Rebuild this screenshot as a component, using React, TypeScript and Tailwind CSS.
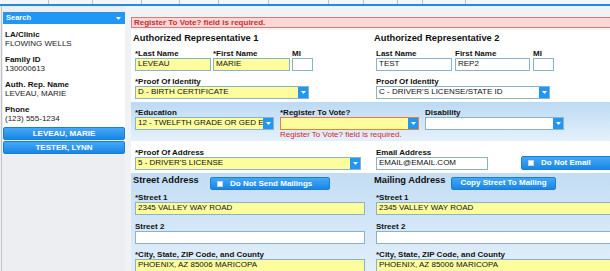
import React from 'react';

function Caret() {
  return (
    <svg width="5" height="3" viewBox="0 0 5 3">
      <path d="M0 0h5L2.5 3z" fill="#fff" />
    </svg>
  );
}

function Label({ children }: { children: React.ReactNode }) {
  return (
    <div className="h-[9px] text-[8px] leading-[9px] font-bold text-[#111] whitespace-nowrap">
      {children}
    </div>
  );
}

interface BoxProps {
  value?: string;
  yellow?: boolean;
  invalid?: boolean;
  className?: string;
}

function TextBox({ value = '', yellow = false, className = '' }: BoxProps) {
  return (
    <div
      className={`h-[13px] border border-[#8ab3c7] ${yellow ? 'bg-[#fdfd9d]' : 'bg-white'} pl-[2px] text-[8px] leading-[10px] text-[#111] whitespace-nowrap overflow-hidden ${className}`}
    >
      {value}
    </div>
  );
}

function Select({ value = '', yellow = false, invalid = false, className = '' }: BoxProps) {
  return (
    <div
      className={`flex h-[13px] border ${invalid ? 'border-[#e2813f]' : 'border-[#8ab3c7]'} ${yellow ? 'bg-[#fdfd9d]' : 'bg-white'} ${className}`}
    >
      <div className="flex-1 min-w-0 pl-[2px] text-[8px] leading-[10px] text-[#111] whitespace-nowrap overflow-hidden">
        {value}
      </div>
      <div className="w-[10px] shrink-0 flex items-center justify-center bg-[#2196f3]">
        <Caret />
      </div>
    </div>
  );
}

function BlueButton({
  children,
  checkbox = false,
  className = '',
}: {
  children: React.ReactNode;
  checkbox?: boolean;
  className?: string;
}) {
  return (
    <div
      className={`flex items-center h-[13px] rounded-[2px] border border-[#1a7ed6] bg-linear-to-b from-[#42a9f7] to-[#1786e6] text-white text-[8px] font-bold whitespace-nowrap ${className}`}
    >
      {checkbox && <span className="w-[6px] h-[6px] bg-white border border-[#c9d3dc] ml-[6px] mr-[7px] shrink-0" />}
      {children}
    </div>
  );
}

function SideGroup({ label, value }: { label: string; value: string }) {
  return (
    <div>
      <div className="text-[8px] leading-[9px] font-bold text-[#111]">{label}</div>
      <div className="text-[8px] leading-[9px] text-[#222]">{value}</div>
    </div>
  );
}

const ticks = [49, 44, 49, 38, 39, 50, 60, 35, 34, 25, 43];

export default function App() {
  return (
    <div className="w-[610px] h-[271px] overflow-hidden bg-[#eceef1] flex flex-col font-['Liberation_Sans',Arial,sans-serif]">
      {/* tab strip remnants */}
      <div className="h-[4px] flex bg-[#f4f5f7]">
        {ticks.map((w, i) => (
          <div key={i} className="h-[4px] border-r border-[#b9c0c8]" style={{ width: w }} />
        ))}
      </div>
      <div className="h-[2px] bg-[#1b8de8]" />

      <div className="flex flex-1 min-h-0">
        {/* sidebar */}
        <div className="w-[124px] shrink-0 ml-[1px] border-l border-[#bfc4cb] flex flex-col">
          <div className="mt-[6px] ml-[1px] h-[12px] flex items-center justify-between bg-[#2196f3] pl-[3px] pr-[4px]">
            <span className="text-[7.5px] font-bold text-white">Search</span>
            <Caret />
          </div>
          <div className="ml-[1px] bg-white pt-[6px] pb-[4px] pl-[2px] flex flex-col gap-[7px]">
            <SideGroup label="LA/Clinic" value="FLOWING WELLS" />
            <SideGroup label="Family ID" value="130000613" />
            <SideGroup label="Auth. Rep. Name" value="LEVEAU, MARIE" />
            <SideGroup label="Phone" value="(123) 555-1234" />
          </div>
          <div className="ml-[1px] flex flex-col gap-[1px]">
            <BlueButton className="h-[11px] justify-center">LEVEAU, MARIE</BlueButton>
            <BlueButton className="h-[11px] justify-center">TESTER, LYNN</BlueButton>
          </div>
        </div>

        {/* main */}
        <div className="w-[486px] shrink-0 pl-[6px] bg-[#f1f2f4] flex flex-col">
          <div className="mt-[11px] h-[11px] w-[520px] border border-[#d9797a] bg-[#fdd6d6] pl-[2px] text-[8px] leading-[9px] font-bold text-[#c62f33] whitespace-nowrap">
            Register To Vote? field is required.
          </div>

          <div className="mt-[2px] flex-1 bg-white w-[520px] flex flex-col">
            {/* Authorized representatives */}
            <div className="flex h-[72px] pt-[3px]">
              <div className="w-[241px] shrink-0">
                <div className="pl-[2px] text-[9.3px] leading-[11px] font-bold text-[#111]">
                  Authorized Representative 1
                </div>
                <div className="pl-[4px] mt-[4.5px] flex gap-[2px]">
                  <div className="w-[76px]">
                    <Label>*Last Name</Label>
                    <TextBox yellow value="LEVEAU" className="h-[12.5px]" />
                  </div>
                  <div className="w-[77px]">
                    <Label>*First Name</Label>
                    <TextBox yellow value="MARIE" className="h-[12.5px]" />
                  </div>
                  <div className="w-[21px]">
                    <Label>MI</Label>
                    <TextBox className="h-[12.5px]" />
                  </div>
                </div>
                <div className="pl-[4px] mt-[6px] w-[178px]">
                  <Label>*Proof Of Identity</Label>
                  <Select yellow value="D - BIRTH CERTIFICATE" />
                </div>
              </div>
              <div className="flex-1">
                <div className="pl-[2px] text-[9.3px] leading-[11px] font-bold text-[#111]">
                  Authorized Representative 2
                </div>
                <div className="pl-[4px] mt-[4.5px] flex gap-[3px]">
                  <div className="w-[76px]">
                    <Label>Last Name</Label>
                    <TextBox value="TEST" className="h-[12.5px]" />
                  </div>
                  <div className="w-[75px]">
                    <Label>First Name</Label>
                    <TextBox value="REP2" className="h-[12.5px]" />
                  </div>
                  <div className="w-[21px]">
                    <Label>MI</Label>
                    <TextBox className="h-[12.5px]" />
                  </div>
                </div>
                <div className="pl-[4px] mt-[6px] w-[178px]">
                  <Label>Proof Of Identity</Label>
                  <Select value="C - DRIVER'S LICENSE/STATE ID" />
                </div>
              </div>
            </div>

            {/* education band */}
            <div className="h-[39px] pt-[5.5px] pl-[4px] flex gap-[6px] bg-linear-to-b from-[#bcdaf3] to-[#e5f1fb]">
              <div className="w-[139px]">
                <Label>*Education</Label>
                <Select yellow value="12 - TWELFTH GRADE OR GED EQUIVALENT" />
              </div>
              <div className="w-[139px]">
                <Label>*Register To Vote?</Label>
                <Select yellow invalid />
                <div className="text-[8px] leading-[9px] text-[#d4252c] whitespace-nowrap">
                  Register To Vote? field is required.
                </div>
              </div>
              <div className="w-[139px]">
                <Label>Disability</Label>
                <Select />
              </div>
            </div>

            {/* proof of address / email */}
            <div className="h-[32px] pt-[7px] flex">
              <div className="w-[241px] shrink-0 pl-[4px]">
                <div className="w-[226px]">
                  <Label>*Proof Of Address</Label>
                  <Select yellow value="5 - DRIVER'S LICENSE" />
                </div>
              </div>
              <div className="flex-1 pl-[4px] flex items-end pb-[3px] gap-[33px]">
                <div className="w-[112px]">
                  <Label>Email Address</Label>
                  <TextBox value="EMAIL@EMAIL.COM" />
                </div>
                <BlueButton checkbox className="w-[110px] h-[14px]">
                  Do Not Email
                </BlueButton>
              </div>
            </div>

            {/* addresses band */}
            <div className="flex-1 pt-[2px] flex bg-linear-to-b from-[#c3ddf4] to-[#e3effa]">
              <div className="w-[241px] shrink-0">
                <div className="flex items-start pl-[2px]">
                  <div className="w-[77px] shrink-0 text-[9.3px] leading-[11px] font-bold text-[#111]">
                    Street Address
                  </div>
                  <BlueButton checkbox className="mt-[2px] w-[120px] h-[12.5px]">
                    Do Not Send Mailings
                  </BlueButton>
                </div>
                <div className="pl-[4px] mt-[3px] w-[234px]">
                  <Label>*Street 1</Label>
                  <TextBox yellow value="2345 VALLEY WAY ROAD" />
                </div>
                <div className="pl-[4px] mt-[7px] w-[234px]">
                  <Label>Street 2</Label>
                  <TextBox />
                </div>
                <div className="pl-[4px] mt-[6px] w-[234px]">
                  <Label>*City, State, ZIP Code, and County</Label>
                  <TextBox yellow value="PHOENIX, AZ 85006 MARICOPA" />
                </div>
              </div>
              <div className="flex-1">
                <div className="flex items-start pl-[2px]">
                  <div className="w-[77px] shrink-0 text-[9.3px] leading-[11px] font-bold text-[#111]">
                    Mailing Address
                  </div>
                  <BlueButton className="mt-[1.5px] w-[105px] h-[12px] justify-center">
                    Copy Street To Mailing
                  </BlueButton>
                </div>
                <div className="pl-[4px] mt-[3.5px] w-[260px]">
                  <Label>*Street 1</Label>
                  <TextBox yellow value="2345 VALLEY WAY ROAD" />
                </div>
                <div className="pl-[4px] mt-[7px] w-[260px]">
                  <Label>Street 2</Label>
                  <TextBox />
                </div>
                <div className="pl-[4px] mt-[6px] w-[260px]">
                  <Label>*City, State, ZIP Code, and County</Label>
                  <TextBox yellow value="PHOENIX, AZ 85006 MARICOPA" />
                </div>
              </div>
            </div>
          </div>
        </div>
      </div>
    </div>
  );
}
